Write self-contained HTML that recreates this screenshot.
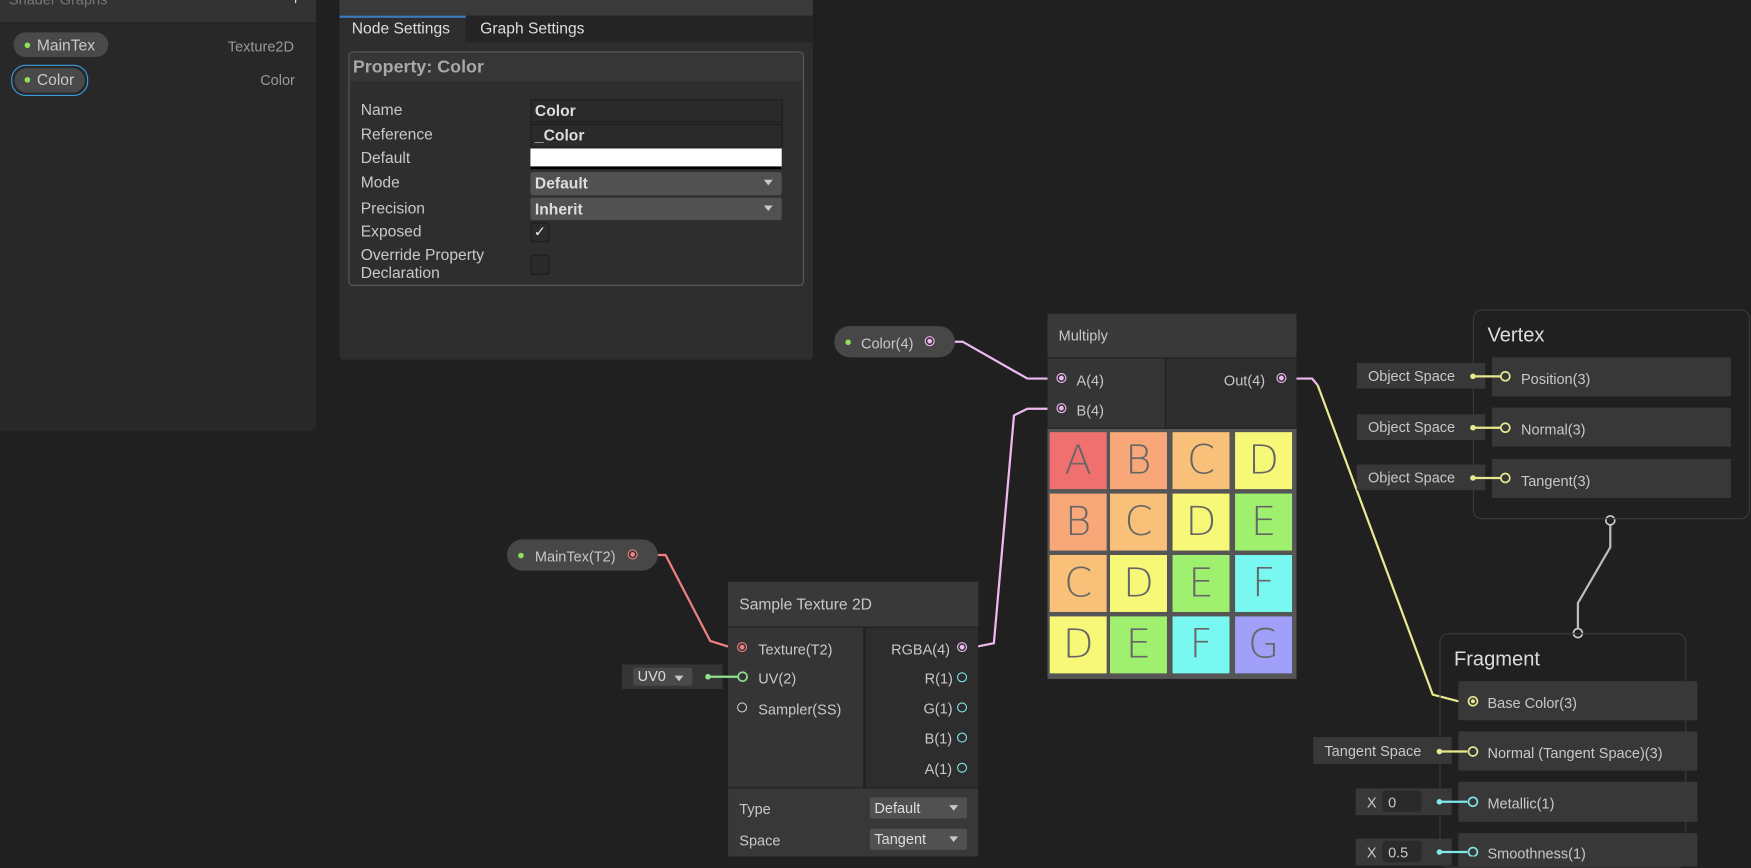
<!DOCTYPE html>
<html><head><meta charset="utf-8"><style>
html,body{margin:0;padding:0;background:#202020;width:1751px;height:857px;overflow:hidden}
#w{position:absolute;left:0;top:0;width:1568px;height:767px;transform:scale(1.11671);transform-origin:0 0;font-family:"Liberation Sans",sans-serif;color:#c8c8c8;font-size:13px}
.a{position:absolute}
.t{position:absolute;white-space:nowrap}
.row{position:absolute;background:#383838}
.port{position:absolute;width:7px;height:7px;border-radius:50%;border:1.5px solid #fff;box-sizing:content-box}
.dd{position:absolute;background:#515151;border-radius:2px;color:#ddd;font-weight:bold;padding-left:4px;box-sizing:border-box}
.dd:after{content:"";position:absolute;right:8px;top:7px;border:4.5px solid transparent;border-top:5px solid #c8c8c8}
.cell{position:absolute;width:51px;height:51px;font-size:36px;color:#666;text-align:center;line-height:51px;font-family:"DejaVu Sans",sans-serif;font-weight:300}
</style></head><body><div id="w">
<div class="a" style="left:0;top:0;width:283px;height:386px;background:#282828;border-radius:0 0 4px 0"></div>
<div class="a" style="left:0;top:0;width:283px;height:20px;background:#333;border-bottom:1px solid #222"></div>
<div class="t" style="left:8px;top:-8px;color:#777">Shader Graphs</div>
<div class="t" style="left:260px;top:-9px;color:#ddd;font-size:16px">+</div>
<div class="a" style="left:12px;top:29px;width:85px;height:22px;background:#494949;border-radius:11px"></div>
<div class="a" style="left:22px;top:38px;width:5px;height:5px;border-radius:50%;background:#8fe05a"></div>
<div class="t" style="left:33px;top:32px;font-size:14px">MainTex</div>
<div class="t" style="left:204px;top:34px;color:#999">Texture2D</div>
<div class="a" style="left:10px;top:58px;width:67px;height:26px;border:1.5px solid #3a9ee0;border-radius:13px"></div>
<div class="a" style="left:13px;top:61px;width:63px;height:22px;background:#494949;border-radius:11px"></div>
<div class="a" style="left:22px;top:69px;width:5px;height:5px;border-radius:50%;background:#8fe05a"></div>
<div class="t" style="left:33px;top:63px;font-size:14px">Color</div>
<div class="t" style="left:233px;top:64px;color:#999">Color</div>

<div class="a" style="left:304px;top:0;width:424px;height:322px;background:#2e2e2e;border-radius:0 0 4px 4px;border-bottom:1px solid #222"></div>
<div class="a" style="left:304px;top:0;width:424px;height:14px;background:#3a3a3a"></div>
<div class="a" style="left:304px;top:14px;width:424px;height:24px;background:#252525"></div>
<div class="a" style="left:304px;top:14px;width:113px;height:24px;background:#2e2e2e;border-top:2px solid #3a79bb;box-sizing:border-box"></div>
<div class="t" style="left:315px;top:17px;font-size:14px;color:#ddd">Node Settings</div>
<div class="t" style="left:430px;top:17px;font-size:14px;color:#ddd">Graph Settings</div>
<div class="a" style="left:312px;top:46px;width:408px;height:210px;border:1px solid #5a5a5a;border-radius:4px;box-sizing:border-box"></div>
<div class="a" style="left:313px;top:47px;width:406px;height:26px;background:#363636;border-radius:4px 4px 0 0"></div>
<div class="t" style="left:316px;top:52px;font-size:16px;font-weight:bold;color:#a8a8a8">Property: Color</div>
<div class="t" style="left:323px;top:90px;font-size:14px">Name</div>
<div class="t" style="left:323px;top:112px;font-size:14px">Reference</div>
<div class="t" style="left:323px;top:133px;font-size:14px">Default</div>
<div class="t" style="left:323px;top:155px;font-size:14px">Mode</div>
<div class="t" style="left:323px;top:178px;font-size:14px">Precision</div>
<div class="t" style="left:323px;top:199px;font-size:14px">Exposed</div>
<div class="t" style="left:323px;top:220px;font-size:14px;line-height:16px">Override Property<br>Declaration</div>
<div class="a" style="left:475px;top:89px;width:226px;height:21px;background:#2a2a2a;border:1px solid #1e1e1e;box-sizing:border-box"></div>
<div class="t" style="left:479px;top:91px;font-size:14px;font-weight:bold;color:#ddd">Color</div>
<div class="a" style="left:475px;top:111px;width:226px;height:21px;background:#2a2a2a;border:1px solid #1e1e1e;box-sizing:border-box"></div>
<div class="t" style="left:479px;top:113px;font-size:14px;font-weight:bold;color:#ddd">_Color</div>
<div class="a" style="left:475px;top:133px;width:225px;height:16px;background:#fff;border-bottom:3px solid #000"></div>
<div class="dd" style="left:475px;top:154px;width:225px;height:21px;line-height:21px;font-size:14px">Default</div>
<div class="dd" style="left:475px;top:177px;width:225px;height:20px;line-height:20px;font-size:14px">Inherit</div>
<div class="a" style="left:475px;top:199px;width:15px;height:16px;background:#2a2a2a;border:1px solid #1c1c1c;border-radius:2px;color:#eee;font-size:13px;line-height:16px;text-align:center">✓</div>
<div class="a" style="left:475px;top:228px;width:15px;height:16px;background:#2a2a2a;border:1px solid #1c1c1c;border-radius:2px"></div>

<svg class="a" style="left:0;top:0" width="1568" height="767" fill="none">
<path d="M855 306 L862 306 L920 339 L940 339" stroke="#f0b8f0" stroke-width="2"/>
<path d="M875 579 L890 576 L908 372 L920 366 L940 366" stroke="#f0b8f0" stroke-width="2"/>
<path d="M1161 339 L1175 339 L1180 345" stroke="#f0b8f0" stroke-width="2"/>
<path d="M1180 345 L1283 622 L1306 628" stroke="#e8e890" stroke-width="2"/>
<path d="M589 497 L596 497 L636 574 L652 579" stroke="#f08080" stroke-width="2"/>
<path d="M1442 466 L1442 490 L1413 540 L1413 567" stroke="#bbb" stroke-width="2"/>
<circle cx="1442" cy="466" r="4" fill="#202020" stroke="#ccc" stroke-width="1.5"/>
<circle cx="1413" cy="567" r="4" fill="#202020" stroke="#ccc" stroke-width="1.5"/>
</svg>

<div class="a" style="left:747px;top:292px;width:108px;height:28px;background:#474747;border-radius:14px"></div>
<div class="a" style="left:757px;top:304px;width:5px;height:5px;border-radius:50%;background:#8fe05a"></div>
<div class="t" style="left:771px;top:300px">Color(4)</div>
<div class="port" style="left:828px;top:301px;border-color:#f0b8f0;background:radial-gradient(#f0b8f0 40%,#333 45%)"></div>
<div class="a" style="left:454px;top:483px;width:135px;height:28px;background:#474747;border-radius:14px"></div>
<div class="a" style="left:464px;top:495px;width:5px;height:5px;border-radius:50%;background:#8fe05a"></div>
<div class="t" style="left:479px;top:491px">MainTex(T2)</div>
<div class="port" style="left:562px;top:492px;border-color:#f08080;background:radial-gradient(#f08080 40%,#333 45%)"></div>

<div class="a" style="left:938px;top:281px;width:223px;height:39px;background:#393939"></div>
<div class="t" style="left:948px;top:293px">Multiply</div>
<div class="a" style="left:938px;top:321px;width:105px;height:62px;background:#353535"></div>
<div class="a" style="left:1044px;top:321px;width:117px;height:62px;background:#2d2d2d"></div>
<div class="port" style="left:946px;top:334px;border-color:#f0b8f0;background:radial-gradient(#f0b8f0 40%,#333 45%)"></div>
<div class="t" style="left:964px;top:333px">A(4)</div>
<div class="port" style="left:946px;top:361px;border-color:#f0b8f0;background:radial-gradient(#f0b8f0 40%,#333 45%)"></div>
<div class="t" style="left:964px;top:360px">B(4)</div>
<div class="t" style="left:1096px;top:333px">Out(4)</div>
<div class="port" style="left:1143px;top:334px;border-color:#f0b8f0;background:radial-gradient(#f0b8f0 40%,#333 45%)"></div>
<div class="a" style="left:938px;top:384px;width:223px;height:224px;background:#555"></div>
<div class="cell" style="left:940px;top:387px;background:#f07070">A</div>
<div class="cell" style="left:994px;top:387px;background:#f8a878">B</div>
<div class="cell" style="left:1050px;top:387px;background:#f8c078">C</div>
<div class="cell" style="left:1106px;top:387px;background:#f8f878">D</div>
<div class="cell" style="left:940px;top:442px;background:#f8a878">B</div>
<div class="cell" style="left:994px;top:442px;background:#f8c078">C</div>
<div class="cell" style="left:1050px;top:442px;background:#f8f878">D</div>
<div class="cell" style="left:1106px;top:442px;background:#a0f070">E</div>
<div class="cell" style="left:940px;top:497px;background:#f8c078">C</div>
<div class="cell" style="left:994px;top:497px;background:#f8f878">D</div>
<div class="cell" style="left:1050px;top:497px;background:#a0f070">E</div>
<div class="cell" style="left:1106px;top:497px;background:#78f8f0">F</div>
<div class="cell" style="left:940px;top:552px;background:#f8f878">D</div>
<div class="cell" style="left:994px;top:552px;background:#a0f070">E</div>
<div class="cell" style="left:1050px;top:552px;background:#78f8f0">F</div>
<div class="cell" style="left:1106px;top:552px;background:#a0a0f8">G</div>

<div class="a" style="left:652px;top:521px;width:224px;height:40px;background:#393939"></div>
<div class="t" style="left:662px;top:533px;font-size:14px">Sample Texture 2D</div>
<div class="a" style="left:652px;top:562px;width:121px;height:143px;background:#353535"></div>
<div class="a" style="left:775px;top:562px;width:101px;height:143px;background:#2d2d2d"></div>
<div class="a" style="left:652px;top:706px;width:224px;height:61px;background:#383838"></div>
<div class="port" style="left:660px;top:575px;border-color:#f08080;background:radial-gradient(#f08080 40%,#333 45%)"></div>
<div class="t" style="left:679px;top:574px">Texture(T2)</div>
<div class="t" style="left:679px;top:600px">UV(2)</div>
<div class="port" style="left:660px;top:629px;border-color:#ccc;background:#333"></div>
<div class="t" style="left:679px;top:628px">Sampler(SS)</div>
<div class="t" style="left:798px;top:574px">RGBA(4)</div>
<div class="port" style="left:857px;top:575px;border-color:#f0b8f0;background:radial-gradient(#f0b8f0 40%,#333 45%)"></div>
<div class="t" style="left:828px;top:600px">R(1)</div><div class="port" style="left:857px;top:602px;border-color:#7ee8e8;background:#2d2d2d"></div>
<div class="t" style="left:827px;top:627px">G(1)</div><div class="port" style="left:857px;top:629px;border-color:#7ee8e8;background:#2d2d2d"></div>
<div class="t" style="left:828px;top:654px">B(1)</div><div class="port" style="left:857px;top:656px;border-color:#7ee8e8;background:#2d2d2d"></div>
<div class="t" style="left:828px;top:681px">A(1)</div><div class="port" style="left:857px;top:683px;border-color:#7ee8e8;background:#2d2d2d"></div>
<div class="t" style="left:662px;top:717px">Type</div>
<div class="dd" style="left:779px;top:714px;width:87px;height:19px;line-height:19px;font-weight:normal;font-size:13px">Default</div>
<div class="t" style="left:662px;top:745px">Space</div>
<div class="dd" style="left:779px;top:742px;width:87px;height:19px;line-height:19px;font-weight:normal;font-size:13px">Tangent</div>
<div class="a" style="left:557px;top:595px;width:90px;height:22px;background:#353535"></div>
<div class="dd" style="left:567px;top:598px;width:53px;height:16px;line-height:16px;font-weight:normal;font-size:13px;background:#4a4a4a">UV0</div>

<div class="a" style="left:1319px;top:277px;width:248px;height:188px;border:1px solid #3a3a3a;border-radius:8px;box-sizing:border-box"></div>
<div class="t" style="left:1332px;top:290px;font-size:18px;color:#ddd">Vertex</div>
<div class="row" style="left:1336px;top:320px;width:214px;height:35px"></div>
<div class="row" style="left:1336px;top:365px;width:214px;height:35px"></div>
<div class="row" style="left:1336px;top:411px;width:214px;height:35px"></div>
<div class="row" style="left:1215px;top:325px;width:115px;height:23px"></div>
<div class="row" style="left:1215px;top:371px;width:115px;height:23px"></div>
<div class="row" style="left:1215px;top:416px;width:115px;height:23px"></div>
<div class="t" style="left:1225px;top:329px">Object Space</div>
<div class="t" style="left:1225px;top:375px">Object Space</div>
<div class="t" style="left:1225px;top:420px">Object Space</div>
<div class="t" style="left:1362px;top:332px">Position(3)</div>
<div class="t" style="left:1362px;top:377px">Normal(3)</div>
<div class="t" style="left:1362px;top:423px">Tangent(3)</div>

<div class="a" style="left:1289px;top:567px;width:221px;height:210px;border:1px solid #3a3a3a;border-radius:8px;box-sizing:border-box"></div>
<div class="t" style="left:1302px;top:580px;font-size:18px;color:#ddd">Fragment</div>
<div class="row" style="left:1306px;top:610px;width:214px;height:35px"></div>
<div class="row" style="left:1306px;top:655px;width:214px;height:35px"></div>
<div class="row" style="left:1306px;top:700px;width:214px;height:36px"></div>
<div class="row" style="left:1306px;top:746px;width:214px;height:30px"></div>
<div class="t" style="left:1332px;top:622px">Base Color(3)</div>
<div class="t" style="left:1332px;top:667px">Normal (Tangent Space)(3)</div>
<div class="t" style="left:1332px;top:712px">Metallic(1)</div>
<div class="t" style="left:1332px;top:757px">Smoothness(1)</div>
<div class="row" style="left:1176px;top:660px;width:124px;height:24px"></div>
<div class="t" style="left:1186px;top:665px">Tangent Space</div>
<div class="row" style="left:1214px;top:706px;width:86px;height:24px"></div>
<div class="t" style="left:1224px;top:711px">X</div>
<div class="a" style="left:1238px;top:708px;width:35px;height:19px;background:#2a2a2a;border-radius:3px"></div>
<div class="t" style="left:1243px;top:711px">0</div>
<div class="row" style="left:1214px;top:751px;width:86px;height:24px"></div>
<div class="t" style="left:1224px;top:756px">X</div>
<div class="a" style="left:1238px;top:753px;width:35px;height:19px;background:#2a2a2a;border-radius:3px"></div>
<div class="t" style="left:1243px;top:756px">0.5</div>

<svg class="a" style="left:0;top:0" width="1568" height="767" fill="none">
<path d="M634 606 L662 606" stroke="#8fe08f" stroke-width="2"/>
<circle cx="634" cy="606" r="2.5" fill="#8fe08f"/>
<circle cx="665" cy="606" r="4" fill="#353535" stroke="#8fe08f" stroke-width="1.5"/>
<g stroke="#e8e890" stroke-width="2"><path d="M1319 337H1344M1319 383H1344M1319 428H1344M1289 673H1314"/></g>
<g stroke="#7ee8e8" stroke-width="2"><path d="M1289 718H1314M1289 763H1314"/></g>
<g fill="#e8e890"><circle cx="1319" cy="337" r="2.5"/><circle cx="1319" cy="383" r="2.5"/><circle cx="1319" cy="428" r="2.5"/><circle cx="1289" cy="673" r="2.5"/></g>
<g fill="#7ee8e8"><circle cx="1289" cy="718" r="2.5"/><circle cx="1289" cy="763" r="2.5"/></g>
<g fill="#383838" stroke="#e8e890" stroke-width="1.5"><circle cx="1348" cy="337" r="4"/><circle cx="1348" cy="383" r="4"/><circle cx="1348" cy="428" r="4"/><circle cx="1319" cy="673" r="4"/><circle cx="1319" cy="628" r="4"/></g>
<circle cx="1319" cy="628" r="1.8" fill="#e8e890"/>
<g fill="#383838" stroke="#7ee8e8" stroke-width="1.5"><circle cx="1319" cy="718" r="4"/><circle cx="1319" cy="763" r="4"/></g>
</svg>
</div></body></html>
